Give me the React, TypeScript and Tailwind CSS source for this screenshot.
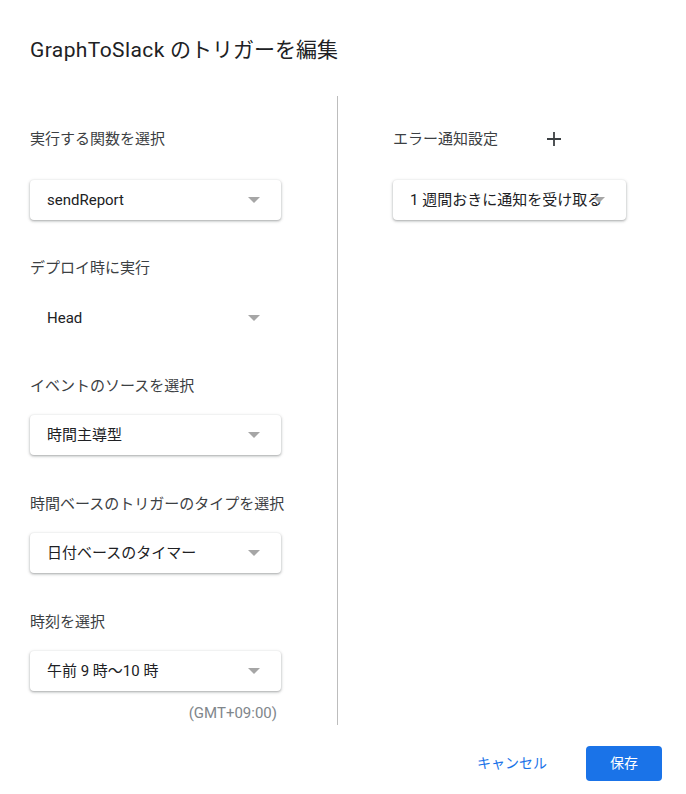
import React from "react";

const font = "font-['Roboto','Noto_Sans_CJK_JP',sans-serif]";

function Arrow() {
  return (
    <span className="absolute right-[21px] top-1/2 -translate-y-1/2 h-0 w-0 border-x-[6px] border-t-[6px] border-x-transparent border-t-[#a6a6a6]" />
  );
}

function Select({ value, width = "w-[251px]" }: { value: string; width?: string }) {
  return (
    <div className={`relative flex h-10 ${width} items-center rounded-[4px] bg-white pl-[17px] text-[15px] text-[#202124] whitespace-nowrap shadow-[0_1px_2px_rgba(60,64,67,0.3),0_1px_3px_1px_rgba(60,64,67,0.15)]`}>
      {value}
      <Arrow />
    </div>
  );
}

function Label({ children, className = "" }: { children: React.ReactNode; className?: string }) {
  return <div className={`h-5 leading-5 text-[15px] text-[#3c4043] ${className}`}>{children}</div>;
}

export default function App() {
  return (
    <div className={`h-[794px] w-[686px] bg-white ${font}`}>
      <h1 className="pl-[30px] pt-[36px] h-[64px] leading-7 text-[21px] text-[#202124]">
        <span className="tracking-[0.4px]">GraphToSlack</span> のトリガーを編集
      </h1>

      <div className="mt-[32px] flex h-[629px]">
        <div className="flex w-[338px] flex-col border-r border-[#bdbdbd] pl-[30px]">
          <Label className="mt-[33px]">実行する関数を選択</Label>
          <div className="mt-[31px]">
            <Select value="sendReport" />
          </div>

          <Label className="mt-[38px]">デプロイ時に実行</Label>
          <div className="relative mt-[20px] flex h-10 w-[251px] items-center pl-[17px] text-[15px] text-[#202124]">
            Head
            <Arrow />
          </div>

          <Label className="mt-[38px]">イベントのソースを選択</Label>
          <div className="mt-[19px]">
            <Select value="時間主導型" />
          </div>

          <Label className="mt-[39px]">時間ベースのトリガーのタイプを選択</Label>
          <div className="mt-[19px]">
            <Select value="日付ベースのタイマー" />
          </div>

          <Label className="mt-[39px]">時刻を選択</Label>
          <div className="mt-[19px]">
            <Select value="午前 9 時〜10 時" />
          </div>
          <div className="mt-[12px] w-[247px] text-right leading-5 text-[15px] text-[#80868b]">(GMT+09:00)</div>
        </div>

        <div className="flex flex-col pl-[55px]">
          <div className="mt-[33px] flex h-5 items-center">
            <Label>エラー通知設定</Label>
            <svg className="ml-[48px]" width="16" height="16" viewBox="0 0 16 16">
              <path d="M8 1v14M1 8h14" stroke="#3c4043" strokeWidth="1.8" fill="none" />
            </svg>
          </div>
          <div className="mt-[31px]">
            <Select value="1 週間おきに通知を受け取る" width="w-[233px]" />
          </div>
        </div>
      </div>

      <div className="mt-[21px] flex items-center justify-end pr-[24px]">
        <button className="mr-[39px] text-[14px] text-[#1a73e8]">キャンセル</button>
        <button className="h-[35px] w-[76px] rounded-[4px] bg-[#1a73e8] text-[14px] text-white">保存</button>
      </div>
    </div>
  );
}
